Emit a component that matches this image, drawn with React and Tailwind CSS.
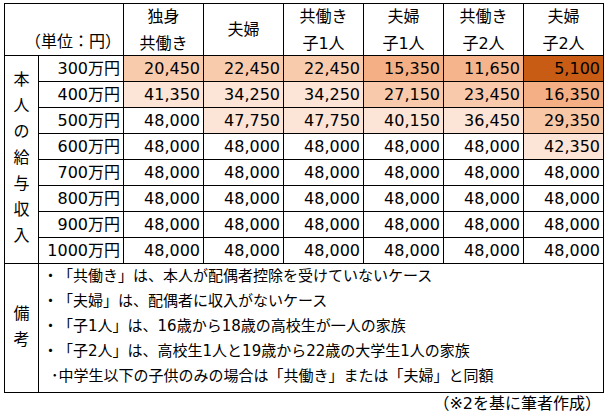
const font = { fontFamily: '"DejaVu Sans", "Noto Sans CJK JP", sans-serif' };

const cols = [
  ["独身", "共働き"],
  ["夫婦"],
  ["共働き", "子1人"],
  ["夫婦", "子1人"],
  ["共働き", "子2人"],
  ["夫婦", "子2人"],
];

const rows = [
  { label: "300万円", cells: [["20,450", "bg-[#f8cbad]"], ["22,450", "bg-[#f8cbad]"], ["22,450", "bg-[#f8cbad]"], ["15,350", "bg-[#f4b084]"], ["11,650", "bg-[#f5b48c]"], ["5,100", "bg-[#c85c14]"]] },
  { label: "400万円", cells: [["41,350", "bg-[#fce4d6]"], ["34,250", "bg-[#fce4d6]"], ["34,250", "bg-[#fce4d6]"], ["27,150", "bg-[#f8caab]"], ["23,450", "bg-[#f8caab]"], ["16,350", "bg-[#f4b084]"]] },
  { label: "500万円", cells: [["48,000", "bg-white"], ["47,750", "bg-[#fce4d6]"], ["47,750", "bg-[#fce4d6]"], ["40,150", "bg-[#fce4d6]"], ["36,450", "bg-[#fce4d6]"], ["29,350", "bg-[#f8c7a5]"]] },
  { label: "600万円", cells: [["48,000", "bg-white"], ["48,000", "bg-white"], ["48,000", "bg-white"], ["48,000", "bg-white"], ["48,000", "bg-white"], ["42,350", "bg-[#fce4d6]"]] },
  { label: "700万円" },
  { label: "800万円" },
  { label: "900万円" },
  { label: "1000万円" },
];

const notes = [
  "・「共働き」は、本人が配偶者控除を受けていないケース",
  "・「夫婦」は、配偶者に収入がないケース",
  "・「子1人」は、16歳から18歳の高校生が一人の家族",
  "・「子2人」は、高校生1人と19歳から22歳の大学生1人の家族",
];

const full = Array(6).fill(["48,000", "bg-white"]);

export default function App() {
  return (
    <div className="w-[608px] h-[413px] bg-white text-black pt-[3px] pl-[4px] [text-spacing-trim:space-all]" style={font}>
      <div className="grid w-[600px] bg-black p-px gap-px grid-cols-[33px_84px_repeat(6,79px)] grid-rows-[51px_repeat(8,25px)_128px] text-[16px]">
        <div className="col-span-2 bg-white flex items-end pl-[20px] leading-[26px]">（単位：円）</div>
        {cols.map((c, i) => (
          <div key={i} className="bg-white flex flex-col items-center justify-center leading-[27px]">
            {c.map((t) => (
              <span key={t}>{t}</span>
            ))}
          </div>
        ))}

        {rows.map((r, ri) => (
          <>
            {ri === 0 && (
              <div key="side" className="row-span-8 bg-white flex flex-col items-center justify-center leading-[26px] pb-[4px]">
                {"本人の給与収入".split("").map((ch, k) => (
                  <span key={k}>{ch}</span>
                ))}
              </div>
            )}
            <div key={r.label} className="bg-white flex items-center justify-end pr-[3px]">{r.label}</div>
            {(r.cells || full).map(([v, bg], ci) => (
              <div key={r.label + ci} className={`${bg} flex items-center justify-end pr-[3px]`}>{v}</div>
            ))}
          </>
        ))}

        <div className="bg-white flex flex-col items-center justify-center leading-[26px] pb-[3px]">
          <span>備</span>
          <span>考</span>
        </div>
        <div className="col-span-7 bg-white flex flex-col pl-[4px] text-[15px] leading-[25px]">
          {notes.map((n) => (
            <span key={n}>{n}</span>
          ))}
          <span className="pl-[8px]">･中学生以下の子供のみの場合は「共働き」または「夫婦」と同額</span>
        </div>
      </div>
      <div className="w-[597px] text-right text-[16px] leading-[22px]">（※2を基に筆者作成）</div>
    </div>
  );
}
